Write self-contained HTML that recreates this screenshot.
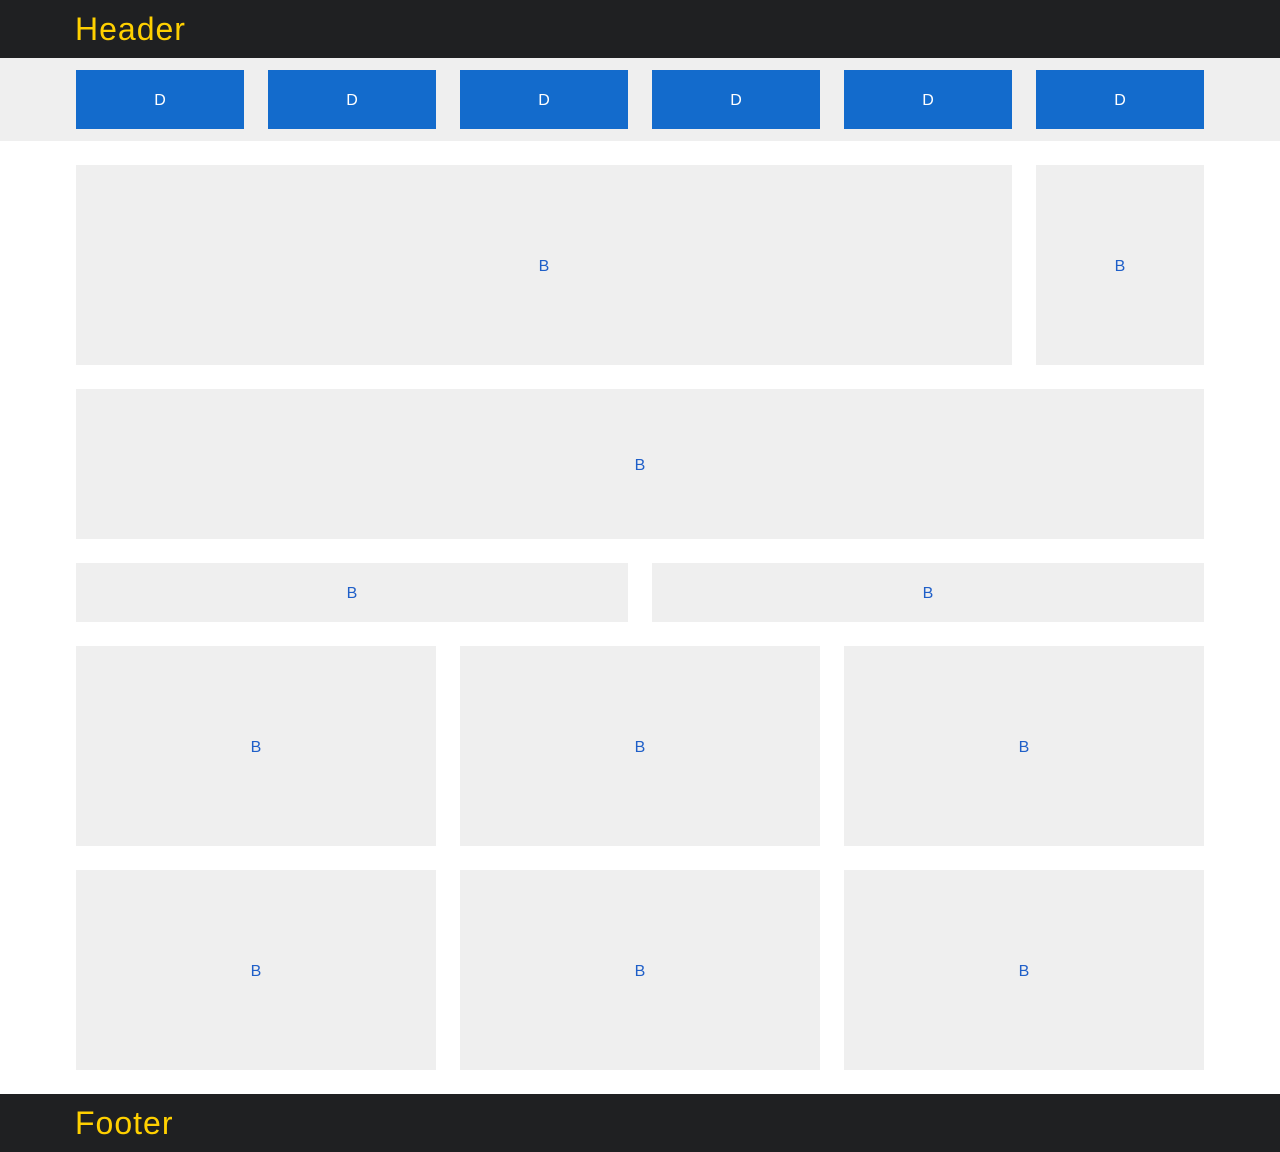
<!DOCTYPE html>
<html><head><meta charset="utf-8"><style>
*{margin:0;padding:0;box-sizing:border-box}
body{width:1280px;height:1152px;background:#fff;font-family:"Liberation Sans",sans-serif;position:relative;overflow:hidden}
.bar{position:absolute;left:0;width:1280px;height:58px;background:#1f2022;color:#ffd000;font-size:32px;line-height:58px;padding-left:75px;letter-spacing:1px}
.nav{position:absolute;left:0;top:58px;width:1280px;height:83px;background:#efefef}
.d{position:absolute;top:70px;width:168px;height:59px;background:#136bcc;color:#fff;font-size:16px;display:flex;align-items:center;justify-content:center;padding-top:3px}
.b{position:absolute;background:#efefef;color:#1f5fc8;font-size:16px;display:flex;align-items:center;justify-content:center;padding-top:3px}
</style></head><body>
<div class="bar" style="top:0">Header</div>
<div class="nav"></div>
<div class="d" style="left:76px">D</div>
<div class="d" style="left:268px">D</div>
<div class="d" style="left:460px">D</div>
<div class="d" style="left:652px">D</div>
<div class="d" style="left:844px">D</div>
<div class="d" style="left:1036px">D</div>
<div class="b" style="left:76px;top:165px;width:936px;height:200px">B</div>
<div class="b" style="left:1036px;top:165px;width:168px;height:200px">B</div>
<div class="b" style="left:76px;top:389px;width:1128px;height:150px">B</div>
<div class="b" style="left:76px;top:563px;width:552px;height:59px">B</div>
<div class="b" style="left:652px;top:563px;width:552px;height:59px">B</div>
<div class="b" style="left:76px;top:646px;width:360px;height:200px">B</div>
<div class="b" style="left:460px;top:646px;width:360px;height:200px">B</div>
<div class="b" style="left:844px;top:646px;width:360px;height:200px">B</div>
<div class="b" style="left:76px;top:870px;width:360px;height:200px">B</div>
<div class="b" style="left:460px;top:870px;width:360px;height:200px">B</div>
<div class="b" style="left:844px;top:870px;width:360px;height:200px">B</div>
<div class="bar" style="top:1094px">Footer</div>
</body></html>
